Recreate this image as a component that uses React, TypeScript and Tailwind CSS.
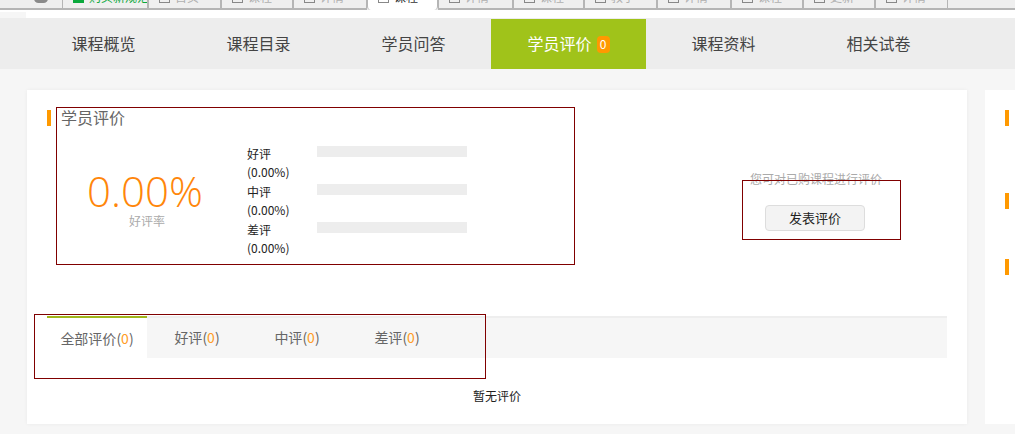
/**
 * Página de curso: pestañas del navegador, menú del curso y tarjeta de evaluaciones.
 */
import * as React from 'react';

const browserTabs = [
  { w: 'w-[86px]', label: '购买新规范', green: true },
  { w: 'w-[73px]', label: '首页' },
  { w: 'w-[72px]', label: '课程' },
  { w: 'w-[74px]', label: '详情' },
  { w: 'w-[71px]', label: '课程', active: true },
  { w: 'w-[75px]', label: '详情' },
  { w: 'w-[71px]', label: '课程' },
  { w: 'w-[73px]', label: '教学' },
  { w: 'w-[74px]', label: '详情' },
  { w: 'w-[72px]', label: '课程' },
  { w: 'w-[72px]', label: '更新' },
  { w: 'w-[73px]', label: '详情' },
];

const navItems = ['课程概览', '课程目录', '学员问答', '学员评价', '课程资料', '相关试卷'];

const ratings = ['好评', '中评', '差评'];

const reviewTabs = [
  { label: '全部评价', active: true },
  { label: '好评' },
  { label: '中评' },
  { label: '差评' },
];

function BrowserStrip() {
  return (
    <div className="flex h-[10px] bg-[#efefef]">
      <div className="relative w-[62px] shrink-0 border-b-2 border-[#b5b5b5]">
        <div className="absolute left-[34px] top-[-6px] h-[9px] w-[14px] rounded-full bg-[#8a8a8a]" />
      </div>
      {browserTabs.map((tab, i) => (
        <div
          key={i}
          className={`flex h-[10px] shrink-0 items-start overflow-hidden border-x border-[#b5b5b5] pl-[10px] ${tab.w} ${
            tab.active ? 'rounded-b-sm bg-white' : 'border-b-2'
          }`}
        >
          <div className="flex h-[3px] items-end gap-[5px] overflow-hidden">
            {tab.green ? (
              <div className="h-[12px] w-[11px] shrink-0 bg-[#0aa83c]" />
            ) : (
              <div className="h-[12px] w-[11px] shrink-0 border border-[#888]" />
            )}
            <span
              className={`whitespace-nowrap text-[12px] leading-[12px] ${
                tab.green ? 'text-[#0aa83c]' : tab.active ? 'text-[#333]' : 'text-[#b0b0b0]'
              }`}
            >
              {tab.label}
            </span>
          </div>
        </div>
      ))}
      <div className="grow border-b-2 border-[#b5b5b5]" />
    </div>
  );
}

function CourseNav() {
  return (
    <div className="flex h-[51px] bg-[#ededed] pl-[26px] pt-px">
      {navItems.map((item) => {
        const active = item === '学员评价';
        return (
          <div
            key={item}
            className={`flex h-[50px] w-[155px] items-center justify-center gap-[5px] pb-[2px] text-[16px] ${
              active ? 'bg-[#a0c31a] text-white' : 'text-[#444]'
            }`}
          >
            <span>{item}</span>
            {active && (
              <span className="mt-[2px] flex h-[17px] w-[13px] items-center justify-center rounded-sm bg-[#ff9900] text-[12px] leading-none">
                0
              </span>
            )}
          </div>
        );
      })}
    </div>
  );
}

function RatingSummary() {
  return (
    <div className="flex justify-between">
      <div className="w-[520px]">
        <div className="flex h-[16px] items-center gap-[10px]">
          <div className="h-[16px] w-[4px] bg-[#ff9900]" />
          <h2 className="-mt-[2px] text-[16px] leading-[16px] text-[#666]">学员评价</h2>
        </div>
        <div className="mt-[17px] flex">
          <div className="flex w-[196px] flex-col items-center pt-[28px]">
            <div className="font-['Open_Sans'] text-[42px] font-light leading-[40px] text-[#ff860a]">0.00%</div>
            <div className="mt-[2px] pl-[4px] text-[12px] leading-[16px] text-[#aaa]">好评率</div>
          </div>
          <div className="ml-[4px] flex flex-col">
            {ratings.map((name) => (
              <div key={name} className="flex h-[38px]">
                <div className="w-[70px] pt-[2px] text-[12px] leading-[18px] text-[#222]">
                  {name}
                  <br />
                  (0.00%)
                </div>
                <div className="mt-[3px] h-[11px] w-[150px] bg-[#ededed]" />
              </div>
            ))}
          </div>
        </div>
      </div>
      <div className="mr-[65px] flex w-[132px] flex-col items-center pt-[61px]">
        <p className="whitespace-nowrap text-[12px] leading-[16px] text-[#aaa]">您可对已购课程进行评价</p>
        <button className="mr-[2px] mt-[18px] h-[26px] w-[100px] rounded-sm border border-[#dddddd] bg-[#f3f3f3] text-[13px] text-[#222]">
          发表评价
        </button>
      </div>
    </div>
  );
}

function ReviewTabs() {
  return (
    <div className="mt-[59px] flex h-[42px] border-t-2 border-[#eeeeee] bg-[#f6f6f6]">
      {reviewTabs.map((tab) => (
        <div
          key={tab.label}
          className={`-mt-[2px] flex h-[42px] w-[100px] items-center justify-center pt-px text-[14px] text-[#666] ${
            tab.active ? 'border-t-2 border-[#a0b51a] bg-white' : ''
          }`}
        >
          {tab.label}(<span className="text-[#ff9c26]">0</span>)
        </div>
      ))}
    </div>
  );
}

export default function App() {
  return (
    <div className="relative h-[434px] w-[1015px] overflow-hidden bg-[#f6f6f6] font-['Noto_Sans_CJK_SC','Open_Sans',sans-serif]">
      <BrowserStrip />
      <div className="h-[8px] bg-white">
        <div className="h-[2px]" />
        <div className="h-[6px] w-[26px] bg-[#f6f6f6]" />
      </div>
      <CourseNav />

      <div className="mt-[21px] flex gap-[18px] pl-[27px]">
        <div className="h-[334px] w-[940px] shrink-0 bg-white px-[20px] pt-[20px] shadow-[0_0_4px_rgba(0,0,0,0.05)]">
          <RatingSummary />
          <ReviewTabs />
          <p className="mt-[30px] text-center text-[12px] leading-[16px] text-[#222]">暂无评价</p>
        </div>
        <div className="flex h-[334px] grow flex-col bg-white pl-[20px] pt-[20px]">
          <div className="h-[16px] w-[4px] bg-[#ff9900]" />
          <div className="mt-[67px] h-[16px] w-[4px] bg-[#ff9900]" />
          <div className="mt-[50px] h-[16px] w-[4px] bg-[#ff9900]" />
        </div>
      </div>

      {/* recuadros de anotación encima de la captura */}
      <div className="absolute left-[56px] top-[107px] h-[158px] w-[519px] border border-[#800000]" />
      <div className="absolute left-[742px] top-[180px] h-[60px] w-[159px] border border-[#800000]" />
      <div className="absolute left-[34px] top-[314px] h-[65px] w-[452px] border border-[#800000]" />
    </div>
  );
}
